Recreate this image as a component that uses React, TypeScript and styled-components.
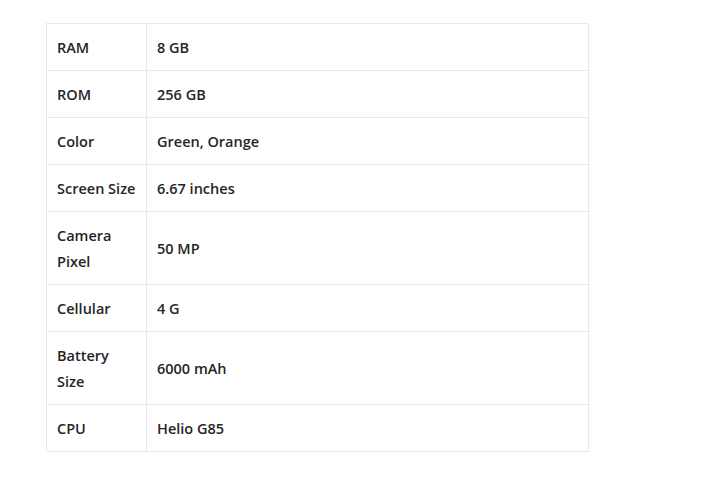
import React from "react";
import styled, { createGlobalStyle } from "styled-components";

const Global = createGlobalStyle`
  html, body { margin: 0; padding: 0; background: #ffffff; }
  body { font-family: "Open Sans", "Noto Sans", sans-serif; color: #262626; }
`;

const Page = styled.div`
  padding: 23px 0 0 46px;
`;

const Table = styled.table`
  width: 543px;
  border-collapse: collapse;
  table-layout: fixed;
  font-size: 14.5px;
  font-weight: 600;
  line-height: 26px;
`;

const Row = styled.tr``;

const Cell = styled.td<{ $label?: boolean }>`
  border: 1px solid #e9e9e9;
  padding: 11px 10px 9px;
  width: ${(p) => (p.$label ? "79px" : "auto")};
  vertical-align: middle;
  text-align: left;
`;

const specs: [string, string][] = [
  ["RAM", "8 GB"],
  ["ROM", "256 GB"],
  ["Color", "Green, Orange"],
  ["Screen Size", "6.67 inches"],
  ["Camera Pixel", "50 MP"],
  ["Cellular", "4 G"],
  ["Battery Size", "6000 mAh"],
  ["CPU", "Helio G85"],
];

export default function App() {
  return (
    <>
      <Global />
      <Page>
        <Table>
          <tbody>
            {specs.map(([k, v]) => (
              <Row key={k}>
                <Cell $label>{k}</Cell>
                <Cell>{v}</Cell>
              </Row>
            ))}
          </tbody>
        </Table>
      </Page>
    </>
  );
}
